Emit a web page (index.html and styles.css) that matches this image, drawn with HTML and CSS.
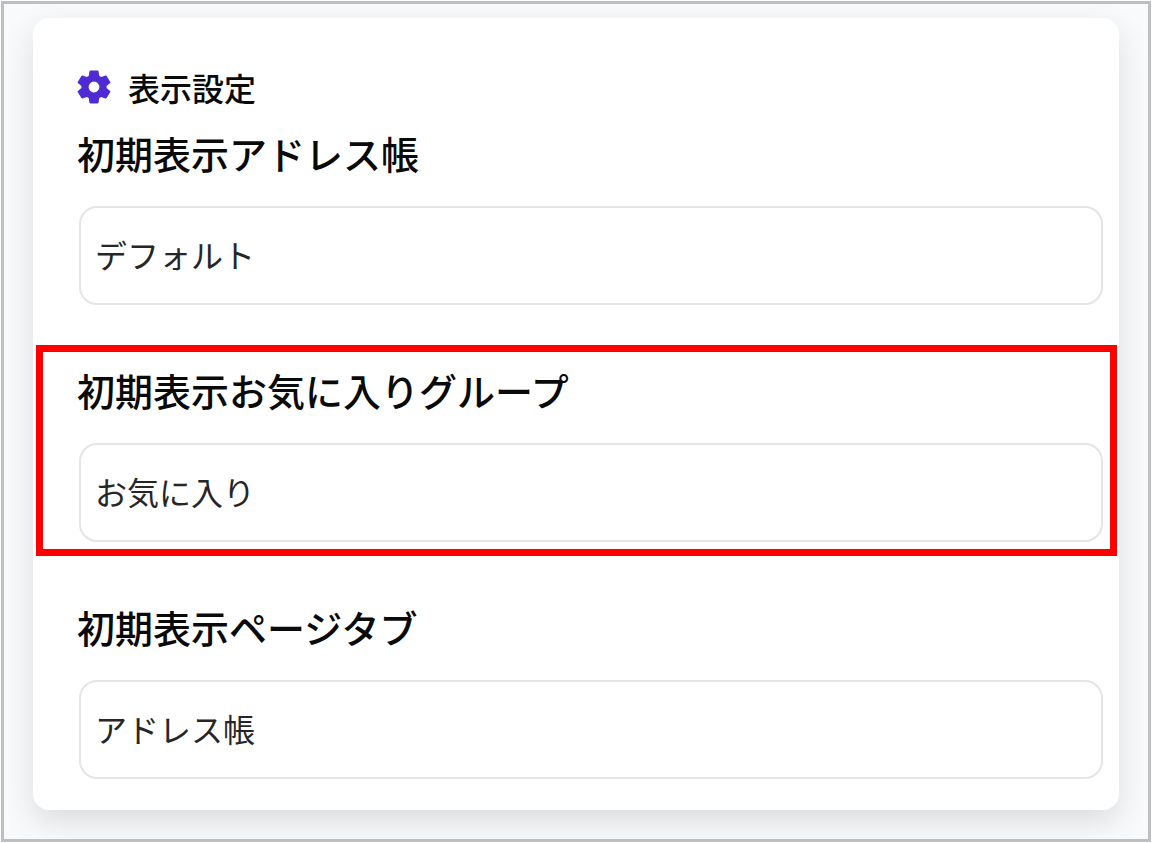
FILE: index.html
```
<!DOCTYPE html>
<html lang="ja">
<head>
<meta charset="utf-8">
<meta name="viewport" content="width=device-width, initial-scale=1">
<title>表示設定</title>
<link rel="stylesheet" href="styles.css">
</head>
<body>
<main class="frame">
  <form class="card">
    <h1 class="title">
      <svg class="gear" viewBox="0 0 34 34" aria-hidden="true">
        <path fill="currentColor" fill-rule="evenodd" d="M13.500 .5h7a1 1 0 0 1 1 .8l.8 4.600 2 1.200 4.100-1.600a1 1 0 0 1 1.200.4l3.700 6a1 1 0 0 1-.2 1.200l-3.500 2.900v2l3.500 2.900a1 1 0 0 1 .2 1.200l-3.700 6a1 1 0 0 1-1.200.4l-4.100-1.600-2 1.200-.8 4.600a1 1 0 0 1-1 .8h-7a1 1 0 0 1-1-.8l-.8-4.600-2-1.200-4.100 1.600a1 1 0 0 1-1.200-.4l-3.700-6a1 1 0 0 1 .2-1.200L4.400 18v-2L.9 13.100a1 1 0 0 1-.2-1.200l3.700-6a1 1 0 0 1 1.200-.4l4.100 1.600 2-1.200.8-4.600a1 1 0 0 1 1-.8zM17 11.600a5.400 5.400 0 1 0 0 10.800 5.400 5.400 0 0 0 0-10.800z"/>
      </svg>
      <span>表示設定</span>
    </h1>
    <div class="fields">
      <div class="field">
        <label class="label" for="book">初期表示アドレス帳</label>
        <select class="select" id="book"><option>デフォルト</option></select>
      </div>
      <div class="field highlighted">
        <label class="label" for="group">初期表示お気に入りグループ</label>
        <select class="select" id="group"><option>お気に入り</option></select>
      </div>
      <div class="field">
        <label class="label" for="tab">初期表示ページタブ</label>
        <select class="select" id="tab"><option>アドレス帳</option></select>
      </div>
    </div>
  </form>
</main>
</body>
</html>
```
FILE: styles.css
```
* {
  box-sizing: border-box;
}

body {
  margin: 0;
  padding: 1px;
  background: #fff;
  color: #0a0a0a;
  font-family: "Noto Sans CJK JP", sans-serif;
}

.frame {
  padding: 14px 29px 29px;
  border: 3px solid #bfbfbf;
  background: #f8fafc;
  overflow: hidden;
}

.card {
  padding: 46px 16px 31px 44px;
  border-radius: 16px;
  background: #fff;
  box-shadow: 0 12px 32px rgba(0, 0, 0, 0.12);
}

.title {
  display: flex;
  align-items: center;
  gap: 17px;
  margin: 0 0 18px;
  font-size: 32px;
  font-weight: 500;
  line-height: 46px;
}

.gear {
  width: 34px;
  height: 34px;
  color: #4f2bd3;
}

.fields {
  display: flex;
  flex-direction: column;
  gap: 60px;
}

.field {
  position: relative;
  display: flex;
  flex-direction: column;
  gap: 28px;
}

.label {
  font-size: 38px;
  font-weight: 500;
  line-height: 50px;
}

.select {
  appearance: none;
  height: 99px;
  margin-left: 2px;
  padding: 0 14px 4px;
  border: 2px solid #e5e5e5;
  border-radius: 18px;
  background: #fff;
  color: #262626;
  font-family: inherit;
  font-size: 32px;
  font-weight: 400;
}

/* Frame drawn round the setting being explained */
.highlighted::after {
  content: "";
  position: absolute;
  inset: -20px -14px -14px -41px;
  border: 7px solid #f00;
  pointer-events: none;
}
```
